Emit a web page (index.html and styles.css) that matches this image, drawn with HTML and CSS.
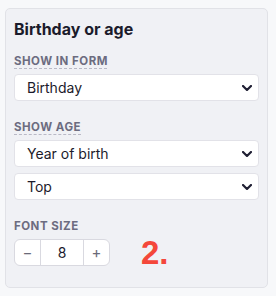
FILE: index.html
```html
<!DOCTYPE html>
<html>
<head>
<meta charset="utf-8">
<link rel="stylesheet" href="styles.css">
</head>
<body>
<div class="panel">
  <h2 class="title">Birthday or age</h2>
  <div class="field">
    <span class="label dotted">SHOW IN FORM</span>
    <div class="select"><span>Birthday</span><svg class="chev" viewBox="0 0 10 6" width="10" height="6"><path d="M1 1l4 4 4-4" fill="none" stroke="#1f1f33" stroke-width="2.2" stroke-linecap="round" stroke-linejoin="round"/></svg></div>
  </div>
  <div class="field">
    <span class="label dotted">SHOW AGE</span>
    <div class="select"><span>Year of birth</span><svg class="chev" viewBox="0 0 10 6" width="10" height="6"><path d="M1 1l4 4 4-4" fill="none" stroke="#1f1f33" stroke-width="2.2" stroke-linecap="round" stroke-linejoin="round"/></svg></div>
    <div class="select"><span>Top</span><svg class="chev" viewBox="0 0 10 6" width="10" height="6"><path d="M1 1l4 4 4-4" fill="none" stroke="#1f1f33" stroke-width="2.2" stroke-linecap="round" stroke-linejoin="round"/></svg></div>
  </div>
  <div class="field">
    <span class="label">FONT SIZE</span>
    <div class="row">
      <div class="stepper">
        <span class="btn">−</span>
        <span class="val">8</span>
        <span class="btn">+</span>
      </div>
      <span class="num">2.</span>
    </div>
  </div>
</div>
</body>
</html>
```

FILE: styles.css
```css
html, body {
  margin: 0;
  padding: 0;
  background: #f7f8fa;
  font-family: Inter, "Noto Sans", sans-serif;
  color: #1b1b2b;
}
.panel {
  margin: 8px 8px 0 5px;
  height: 280px;
  box-sizing: border-box;
  border: 1px solid #e1e2e7;
  border-radius: 5px;
  background: #f0f1f5;
  padding: 10px 8px 0 8px;
  display: flex;
  flex-direction: column;
}
.title {
  margin: 0;
  font-size: 16px;
  line-height: 20px;
  font-weight: 700;
  color: #1b1b2b;
}
.field {
  display: flex;
  flex-direction: column;
  gap: 6px;
  margin-top: 15px;
}
.field + .field { margin-top: 19px; }
.label {
  align-self: flex-start;
  font-size: 11.5px;
  line-height: 14px;
  font-weight: 700;
  letter-spacing: 0.5px;
  color: #6c6c80;
}
.dotted {
  text-decoration: underline dashed #b9b9c6;
  text-underline-offset: 3px;
  text-decoration-thickness: 1px;
}
.select {
  height: 27px;
  box-sizing: border-box;
  background: #fff;
  border: 1px solid #e2e2e8;
  border-radius: 4px;
  display: flex;
  align-items: center;
  justify-content: space-between;
  padding: 0 6px 0 12px;
  font-size: 14px;
  color: #1b1b2b;
}
.row {
  display: flex;
  align-items: center;
  gap: 31px;
}
.stepper {
  display: flex;
  height: 27px;
  width: 96px;
  box-sizing: border-box;
  border: 1px solid #d9d9e0;
  border-radius: 6px;
  background: #fff;
}
.btn {
  width: 25px;
  display: flex;
  align-items: center;
  justify-content: center;
  font-size: 15px;
  color: #6a6a78;
}
.val {
  flex: 1;
  border-left: 1px solid #d9d9e0;
  border-right: 1px solid #d9d9e0;
  display: flex;
  align-items: center;
  justify-content: center;
  font-size: 14px;
  color: #1b1b2b;
}
.num {
  font-family: "Liberation Sans", Arial, sans-serif;
  font-size: 33px;
  font-weight: 700;
  color: #f4473a;
  line-height: 27px;
}
```
